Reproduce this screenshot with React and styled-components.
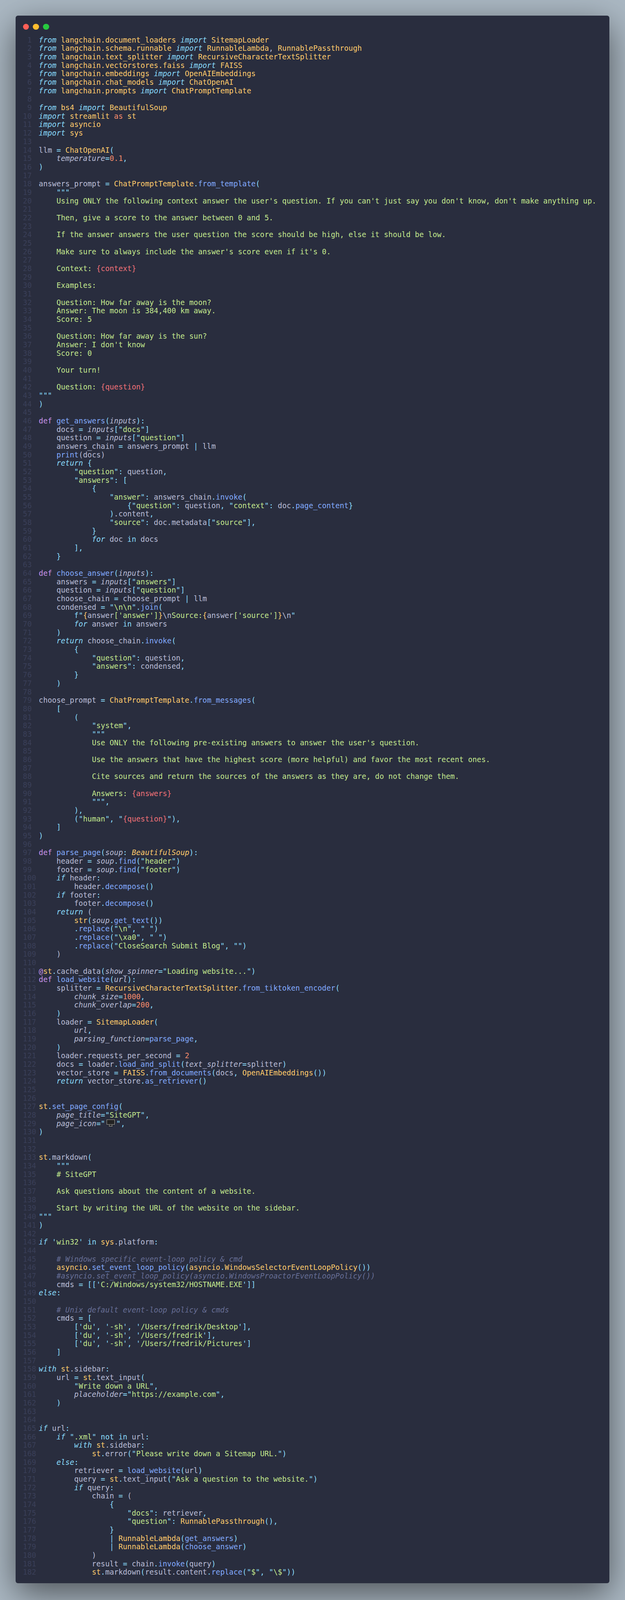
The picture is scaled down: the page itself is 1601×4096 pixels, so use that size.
import React from "react";
import styled, { createGlobalStyle } from "styled-components";

const GlobalStyle = createGlobalStyle`
  html, body {
    margin: 0;
    padding: 0;
    background: #abb8c3;
  }
`;

const COLORS = {
  t: "#babed8",
  v: "#babed8",
  i: "#89ddff",
  c: "#89ddff",
  y: "#ffcb6b",
  Y: "#ffcb6b",
  b: "#82aaff",
  g: "#c3e88d",
  r: "#f07178",
  o: "#f78c6c",
  p: "#c792ea",
  m: "#676e95",
};

const ITALIC = "ivYm";

// §k:text§ marks a token, anything else is plain text
const CODE = `§i:from§ §y:langchain.document_loaders§ §i:import§ §y:SitemapLoader§
§i:from§ §y:langchain.schema.runnable§ §i:import§ §y:RunnableLambda§, §y:RunnablePassthrough§
§i:from§ §y:langchain.text_splitter§ §i:import§ §y:RecursiveCharacterTextSplitter§
§i:from§ §y:langchain.vectorstores.faiss§ §i:import§ §y:FAISS§
§i:from§ §y:langchain.embeddings§ §i:import§ §y:OpenAIEmbeddings§
§i:from§ §y:langchain.chat_models§ §i:import§ §y:ChatOpenAI§
§i:from§ §y:langchain.prompts§ §i:import§ §y:ChatPromptTemplate§

§i:from§ §y:bs4§ §i:import§ §y:BeautifulSoup§
§i:import§ §y:streamlit§ §o:as§ §y:st§
§i:import§ §y:asyncio§
§i:import§ §y:sys§

llm §c:=§ §y:ChatOpenAI§§c:(§
    §v:temperature§§c:=§§o:0.1§§c:,§
§c:)§

answers_prompt §c:=§ §y:ChatPromptTemplate§§c:.§§b:from_template§§c:(§
    §g:"""§
    §g:Using ONLY the following context answer the user's question. If you can't just say you don't know, don't make anything up.§

    §g:Then, give a score to the answer between 0 and 5.§

    §g:If the answer answers the user question the score should be high, else it should be low.§

    §g:Make sure to always include the answer's score even if it's 0.§

    §g:Context: §§r:{context}§

    §g:Examples:§

    §g:Question: How far away is the moon?§
    §g:Answer: The moon is 384,400 km away.§
    §g:Score: 5§

    §g:Question: How far away is the sun?§
    §g:Answer: I don't know§
    §g:Score: 0§

    §g:Your turn!§

    §g:Question: §§r:{question}§
§g:"""§
§c:)§

§p:def§ §b:get_answers§§c:(§§v:inputs§§c:):§
    docs §c:=§ §v:inputs§§c:[§§g:"docs"§§c:]§
    question §c:=§ §v:inputs§§c:[§§g:"question"§§c:]§
    answers_chain §c:=§ answers_prompt §c:|§ llm
    §b:print§(docs)
    §i:return§ §c:{§
        §g:"question"§§c::§ question§c:,§
        §g:"answers"§§c::§ §c:[§
            §c:{§
                §g:"answer"§§c::§ answers_chain§c:.§§b:invoke§§c:(§
                    §c:{§§g:"question"§§c::§ question§c:,§ §g:"context"§§c::§ doc§c:.§§b:page_content§§c:}§
                §c:)§.content§c:,§
                §g:"source"§§c::§ doc.metadata§c:[§§g:"source"§§c:],§
            §c:}§
            §i:for§ doc §c:in§ docs
        §c:],§
    §c:}§

§p:def§ §b:choose_answer§§c:(§§v:inputs§§c:):§
    answers §c:=§ §v:inputs§§c:[§§g:"answers"§§c:]§
    question §c:=§ §v:inputs§§c:[§§g:"question"§§c:]§
    choose_chain §c:=§ choose_prompt §c:|§ llm
    condensed §c:=§ §g:"\\n\\n"§§c:.§§b:join§§c:(§
        §c:f§§g:"§§y:{§answer§g:['answer']§§y:}§§t:\\n§§g:Source:§§y:{§answer§g:['source']§§y:}§§t:\\n§§g:"§
        §i:for§ answer §c:in§ answers
    §c:)§
    §i:return§ choose_chain§c:.§§b:invoke§§c:(§
        §c:{§
            §g:"question"§§c::§ question§c:,§
            §g:"answers"§§c::§ condensed§c:,§
        §c:}§
    §c:)§

choose_prompt §c:=§ §y:ChatPromptTemplate§§c:.§§b:from_messages§§c:(§
    §c:[§
        §c:(§
            §g:"system"§§c:,§
            §g:"""§
            §g:Use ONLY the following pre-existing answers to answer the user's question.§

            §g:Use the answers that have the highest score (more helpful) and favor the most recent ones.§

            §g:Cite sources and return the sources of the answers as they are, do not change them.§

            §g:Answers: §§r:{answers}§
            §g:"""§§c:,§
        §c:),§
        §c:(§§g:"human"§§c:,§ §g:"§§r:{question}§§g:"§§c:),§
    §c:]§
§c:)§

§p:def§ §b:parse_page§§c:(§§v:soup§§c::§ §Y:BeautifulSoup§§c:):§
    header §c:=§ §v:soup§§c:.§§b:find§§c:(§§g:"header"§§c:)§
    footer §c:=§ §v:soup§§c:.§§b:find§§c:(§§g:"footer"§§c:)§
    §i:if§ header§c::§
        header§c:.§§b:decompose§§c:()§
    §i:if§ footer§c::§
        footer§c:.§§b:decompose§§c:()§
    §i:return§ (
        §y:str§§c:(§§v:soup§§c:.§§b:get_text§§c:())§
        §c:.§§b:replace§§c:(§§g:"\\n"§§c:,§ §g:" "§§c:)§
        §c:.§§b:replace§§c:(§§g:"\\xa0"§§c:,§ §g:" "§§c:)§
        §c:.§§b:replace§§c:(§§g:"CloseSearch Submit Blog"§§c:,§ §g:""§§c:)§
    )

§p:@§§y:st§§c:.§cache_data§c:(§§v:show_spinner§§c:=§§g:"Loading website..."§§c:)§
§p:def§ §b:load_website§§c:(§§v:url§§c:):§
    splitter §c:=§ §y:RecursiveCharacterTextSplitter§§c:.§§b:from_tiktoken_encoder§§c:(§
        §v:chunk_size§§c:=§§o:1000§§c:,§
        §v:chunk_overlap§§c:=§§o:200§§c:,§
    §c:)§
    loader §c:=§ §y:SitemapLoader§§c:(§
        §v:url§§c:,§
        §v:parsing_function§§c:=§§b:parse_page§§c:,§
    §c:)§
    loader.requests_per_second §c:=§ §o:2§
    docs §c:=§ loader§c:.§§b:load_and_split§§c:(§§v:text_splitter§§c:=§splitter§c:)§
    vector_store §c:=§ §y:FAISS§§c:.§§b:from_documents§§c:(§docs§c:,§ §y:OpenAIEmbeddings§§c:())§
    §i:return§ vector_store§c:.§§b:as_retriever§§c:()§


§y:st§§c:.§§b:set_page_config§§c:(§
    §v:page_title§§c:=§§g:"SiteGPT"§§c:,§
    §v:page_icon§§c:=§§g:"§@@§g:"§§c:,§
§c:)§


§y:st§§c:.§markdown§c:(§
    §g:"""§
    §g:# SiteGPT§

    §g:Ask questions about the content of a website.§

    §g:Start by writing the URL of the website on the sidebar.§
§g:"""§
§c:)§

§i:if§ §g:'win32'§ §c:in§ §y:sys§.platform§c::§

    §m:# Windows specific event-loop policy & cmd§
    §y:asyncio§§c:.§§b:set_event_loop_policy§§c:(§§y:asyncio§§c:.§§y:WindowsSelectorEventLoopPolicy§§c:())§
    §m:#asyncio.set_event_loop_policy(asyncio.WindowsProactorEventLoopPolicy())§
    cmds §c:=§ §c:[[§§g:'C:/Windows/system32/HOSTNAME.EXE'§§c:]]§
§i:else§§c::§

    §m:# Unix default event-loop policy & cmds§
    cmds §c:=§ §c:[§
        §c:[§§g:'du'§§c:,§ §g:'-sh'§§c:,§ §g:'/Users/fredrik/Desktop'§§c:],§
        §c:[§§g:'du'§§c:,§ §g:'-sh'§§c:,§ §g:'/Users/fredrik'§§c:],§
        §c:[§§g:'du'§§c:,§ §g:'-sh'§§c:,§ §g:'/Users/fredrik/Pictures'§§c:]§
    §c:]§

§i:with§ §y:st§.sidebar§c::§
    url §c:=§ §y:st§§c:.§text_input§c:(§
        §g:"Write down a URL"§§c:,§
        §v:placeholder§§c:=§§g:"https://example.com"§§c:,§
    §c:)§


§i:if§ url§c::§
    §i:if§ §g:".xml"§ §c:not in§ url§c::§
        §i:with§ §y:st§.sidebar§c::§
            §y:st§§c:.§error§c:(§§g:"Please write down a Sitemap URL."§§c:)§
    §i:else§§c::§
        retriever §c:=§ §b:load_website§§c:(§url§c:)§
        query §c:=§ §y:st§§c:.§text_input§c:(§§g:"Ask a question to the website."§§c:)§
        §i:if§ query§c::§
            chain §c:=§ (
                §c:{§
                    §g:"docs"§§c::§ retriever§c:,§
                    §g:"question"§§c::§ §y:RunnablePassthrough§§c:(),§
                §c:}§
                §c:|§ §y:RunnableLambda§§c:(§§b:get_answers§§c:)§
                §c:|§ §y:RunnableLambda§§c:(§§b:choose_answer§§c:)§
            )
            result §c:=§ chain§c:.§§b:invoke§§c:(§query§c:)§
            §y:st§§c:.§markdown§c:(§result.content§c:.§§b:replace§§c:(§§g:"$"§§c:,§ §g:"\\$"§§c:))§`.split("\n");

const Page = styled.div`
  box-sizing: border-box;
  width: 100%;
  min-height: 4096px;
  padding: 40.2px 40px 41px;
  background: #abb8c3;
`;

const Window = styled.main`
  box-sizing: border-box;
  padding: 20.7px 18.6px 17.2px;
  background: #292d3e;
  border-radius: 6px;
  box-shadow: 0 26px 88px rgba(0, 0, 0, 0.55);
`;

const Controls = styled.div`
  display: flex;
  gap: 10.3px;
  margin-bottom: 15.4px;
`;

const Dot = styled.span`
  width: 15.5px;
  height: 15.5px;
  border-radius: 50%;
  background: ${(p) => p.$color};
`;

const CodeBlock = styled.div`
  font-family: "DejaVu Sans Mono", monospace;
  font-size: 18.83px;
  line-height: 21.68px;
  color: ${COLORS.t};
`;

const Line = styled.div`
  display: flex;
  height: 21.68px;
  white-space: pre;
`;

const LineNo = styled.span`
  flex: none;
  width: 2ch;
  margin-right: 18.1px;
  text-align: right;
  color: #3a3f58;
`;

const Token = styled.span`
  color: ${(p) => COLORS[p.$kind]};
  font-style: ${(p) => (ITALIC.includes(p.$kind) ? "italic" : "normal")};
`;

const MonitorIcon = styled.svg`
  display: inline-block;
  width: 28.4px;
  height: 19.6px;
  margin-top: -2px;
  vertical-align: -2px;
`;

function Monitor() {
  return (
    <MonitorIcon viewBox="0 0 55 38" aria-hidden="true">
      <rect x="6" y="0" width="44" height="29" rx="4" fill="#0c0c0c" />
      <rect x="17" y="28" width="22" height="6" fill="#0c0c0c" />
      <rect x="15" y="32" width="25" height="6" rx="2" fill="#0c0c0c" />
      <rect x="8.5" y="2.5" width="39" height="24" fill="#222222" stroke="#b8b8b8" strokeWidth="2" />
      <rect x="20" y="27.5" width="2" height="6" fill="#b8b8b8" />
      <rect x="34" y="27.5" width="2" height="6" fill="#b8b8b8" />
      <rect x="18" y="33.5" width="20" height="2.5" fill="#c4c4c4" />
    </MonitorIcon>
  );
}

// quotes around a string are cyan, the text between them green
function splitString(text) {
  const match = text.match(/^("""|"|')(.*?)("""|"|')?$/);
  if (!match) return [["g", text]];
  return [
    ["c", match[1]],
    ["g", match[2]],
    ["c", match[3] || ""],
  ].filter(([, value]) => value);
}

function renderLine(text) {
  const parts = text.split(/(§\w:[^§]*§|@@)/).filter(Boolean);
  return parts.map((part, i) => {
    if (part === "@@") return <Monitor key={i} />;
    const match = part.match(/^§(\w):([^§]*)§$/);
    if (!match) return part;
    if (match[1] === "g") {
      return splitString(match[2]).map(([kind, value], j) => (
        <Token key={`${i}-${j}`} $kind={kind}>
          {value}
        </Token>
      ));
    }
    return (
      <Token key={i} $kind={match[1]}>
        {match[2]}
      </Token>
    );
  });
}

function App() {
  return (
    <Page>
      <GlobalStyle />
      <Window>
        <Controls>
          <Dot $color="#ff5f56" />
          <Dot $color="#ffbd2e" />
          <Dot $color="#27c93f" />
        </Controls>
        <CodeBlock>
          {CODE.map((text, i) => (
            <Line key={i}>
              <LineNo>{i + 1}</LineNo>
              <span>{renderLine(text)}</span>
            </Line>
          ))}
        </CodeBlock>
      </Window>
    </Page>
  );
}

export default App;
